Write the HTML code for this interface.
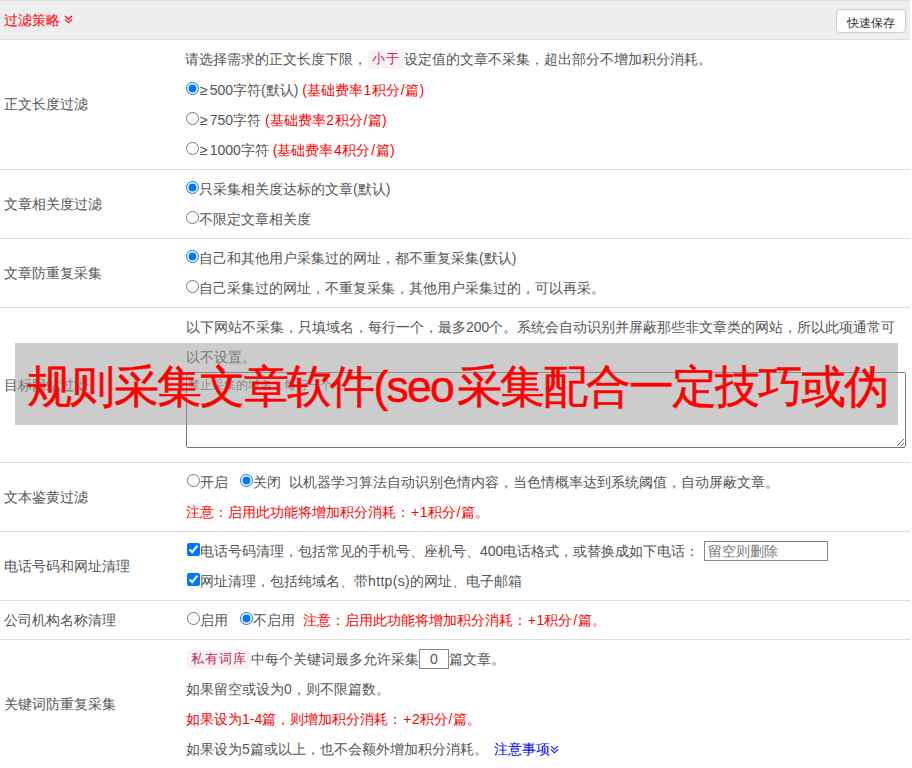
<!DOCTYPE html>
<html><head><meta charset="utf-8">
<style>
html,body{margin:0;padding:0;background:#fff;}
body{width:912px;height:768px;overflow:hidden;position:relative;font-family:"Liberation Sans",sans-serif;font-size:14px;color:#555;}
.hd{position:absolute;left:0;top:0;width:910px;height:38px;background:#eee;border-top:1px solid #ddd;border-bottom:1px solid #ddd;}
.hd .t{position:absolute;left:4px;top:0;line-height:38px;color:#f00;}
.btn{position:absolute;left:836px;top:8px;width:68px;height:22px;border:1px solid #ccc;border-radius:4px;background:#fff;color:#333;font-size:12px;line-height:26px;text-align:center;}
.bl{position:absolute;left:0;width:910px;height:1px;background:#ddd;}
.lb{position:absolute;left:4px;line-height:20px;}
.ln{position:absolute;left:186px;height:30px;line-height:30px;white-space:nowrap;}
.r{color:#f00;}
.b{color:#00f;}
.pill{display:inline-block;background:#f9f2f4;color:#c7254e;border-radius:4px;font-size:12.6px;line-height:19px;height:19px;padding:0 4px 0 4px;letter-spacing:1px;vertical-align:top;margin-top:6px;margin-left:1px;}
.ge{letter-spacing:2px;margin-left:1px;}
.sl{margin:0 0.8px;}
.dg{margin:0 0.6px;}
.lt{letter-spacing:0.35px;}
.pl{margin:0 0.6px 0 1px;}
input[type=radio],input[type=checkbox]{margin:7px 0 0 0;vertical-align:top;width:13px;height:13px;}
input[type=checkbox]{margin-left:1px;}
textarea{position:absolute;left:186px;top:372px;width:720px;height:76px;box-sizing:border-box;margin:0;font-family:"Liberation Sans",sans-serif;font-size:12px;padding:4px 0 0 1px;resize:both;}
textarea::placeholder{color:#777;}
.inp{display:inline-block;box-sizing:border-box;border:1px solid #888;height:20px;line-height:18px;vertical-align:top;margin-top:5px;}
.ov{position:absolute;left:15px;top:343px;width:883px;height:82px;background:rgba(153,153,153,0.5);}
.ovt{position:absolute;left:27px;top:346px;height:81px;line-height:81px;font-size:44.5px;letter-spacing:-1.7px;color:#f00;white-space:nowrap;-webkit-text-stroke:0.5px #f00;}
</style></head><body>
<div class="hd"><span class="t">过滤策略</span><svg style="position:absolute;left:64px;top:14px" width="9" height="9" viewBox="0 0 9 9"><path d="M1 1L4.5 4.5L8 1M1 4.3L4.5 7.8L8 4.3" fill="none" stroke="#f00" stroke-width="1.15"/></svg>
<div class="btn">快速保存</div></div>

<!-- row1 -->
<div class="lb" style="top:94px">正文长度过滤</div>
<div class="ln" style="top:44px;left:185px">请选择需求的正文长度下限，<span class="pill">小于</span>设定值的文章不采集，超出部分不增加积分消耗。</div>
<div class="ln" style="top:75px"><input type="radio" checked><span class="ge">≥</span>500字符(默认) <span class="r">(基础费率<span class="dg">1</span>积分<span class="sl">/</span>篇)</span></div>
<div class="ln" style="top:105px"><input type="radio"><span class="ge">≥</span>750字符 <span class="r">(基础费率<span class="dg">2</span>积分<span class="sl">/</span>篇)</span></div>
<div class="ln" style="top:135px"><input type="radio"><span class="ge">≥</span>1000字符 <span class="r">(基础费率<span class="dg">4</span>积分<span class="sl">/</span>篇)</span></div>
<div class="bl" style="top:169px"></div>

<!-- row2 -->
<div class="lb" style="top:194px">文章相关度过滤</div>
<div class="ln" style="top:174px"><input type="radio" checked>只采集相关度达标的文章(默认)</div>
<div class="ln" style="top:204px"><input type="radio">不限定文章相关度</div>
<div class="bl" style="top:238px"></div>

<!-- row3 -->
<div class="lb" style="top:263px">文章防重复采集</div>
<div class="ln" style="top:243px"><input type="radio" checked>自己和其他用户采集过的网址，都不重复采集(默认)</div>
<div class="ln" style="top:273px"><input type="radio">自己采集过的网址，不重复采集，其他用户采集过的，可以再采。</div>
<div class="bl" style="top:307px"></div>

<!-- row4 -->
<div class="lb" style="top:375px">目标网站过滤</div>
<div class="ln" style="top:312px">以下网站不采集，只填域名，每行一个，最多200个。系统会自动识别并屏蔽那些非文章类的网站，所以此项通常可</div>
<div class="ln" style="top:342px">以不设置。</div>
<textarea placeholder="禁止采集的域名，每行一个"></textarea>
<div class="bl" style="top:462px"></div>

<!-- row5 -->
<div class="lb" style="top:487px">文本鉴黄过滤</div>
<div class="ln" style="top:467px"><input type="radio" style="margin-left:1px">开启 <input type="radio" checked style="margin-left:8.1px">关闭&nbsp; 以机器学习算法自动识别色情内容，当色情概率达到系统阈值，自动屏蔽文章。</div>
<div class="ln r" style="top:497px">注意：启用此功能将增加积分消耗：<span class="pl">+</span>1积分<span class="sl">/</span>篇。</div>
<div class="bl" style="top:531px"></div>

<!-- row6 -->
<div class="lb" style="top:556px">电话号码和网址清理</div>
<div class="ln" style="top:536px"><input type="checkbox" checked>电话号码清理，包括常见的手机号、座机号、400电话格式，或替换成如下电话：<span class="inp" style="width:124px;margin-left:5px"><span style="color:#777;padding-left:3px">留空则删除</span></span></div>
<div class="ln" style="top:566px"><input type="checkbox" checked>网址清理，包括纯域名、带<span class="lt">http(s)</span>的网址、电子邮箱</div>
<div class="bl" style="top:600px"></div>

<!-- row7 -->
<div class="lb" style="top:610px">公司机构名称清理</div>
<div class="ln" style="top:605px"><input type="radio" style="margin-left:1px">启用 <input type="radio" checked style="margin-left:8.1px">不启用&nbsp; <span class="r">注意：启用此功能将增加积分消耗：<span class="pl">+</span>1积分<span class="sl">/</span>篇。</span></div>
<div class="bl" style="top:639px"></div>

<!-- row8 -->
<div class="lb" style="top:694px">关键词防重复采集</div>
<div class="ln" style="top:644px"><span class="pill">私有词库</span>中每个关键词最多允许采集<span class="inp" style="width:30px;text-align:center">0</span>篇文章。</div>
<div class="ln" style="top:674px">如果留空或设为0，则不限篇数。</div>
<div class="ln r" style="top:704px">如果设为1-4篇，则增加积分消耗：<span class="pl">+</span>2积分<span class="sl">/</span>篇。</div>
<div class="ln" style="top:734px">如果设为5篇或以上，也不会额外增加积分消耗。 <span class="b" style="margin-left:2px">注意事项<svg width="9" height="9" viewBox="0 0 9 9" style="vertical-align:0px"><path d="M1 1L4.5 4.5L8 1M1 4.3L4.5 7.8L8 4.3" fill="none" stroke="#00f" stroke-width="1.05"/></svg></span></div>

<div class="ov"></div>
<div class="ovt">规则采集文章软件(seo<span style="position:relative;left:4px;letter-spacing:-2px">采集配合一定技巧或伪</span></div>
</body></html>
